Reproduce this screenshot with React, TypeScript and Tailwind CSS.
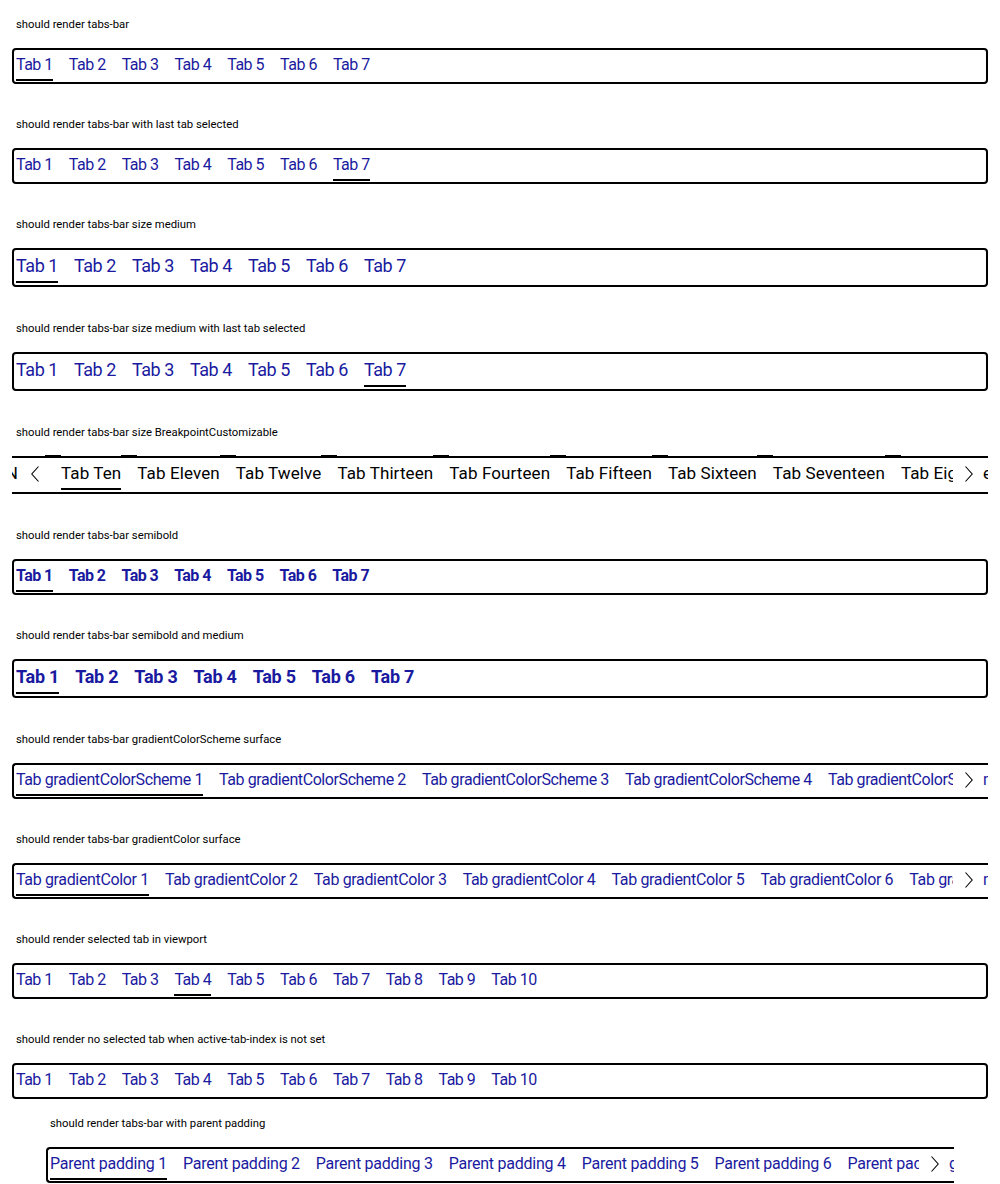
import clsx from "clsx";

type Size = "small" | "medium";

function Chevron({ dir }: { dir: "left" | "right" }) {
  return (
    <svg width="8" height="16" viewBox="0 0 8 16" fill="none" className="shrink-0">
      <polyline
        points={dir === "left" ? "7.5,0.5 0.8,8 7.5,15.5" : "0.5,0.5 7.2,8 0.5,15.5"}
        stroke="#000"
        strokeWidth="1.1"
      />
    </svg>
  );
}

function Tab({
  label,
  active,
  size,
  bold,
  tracking,
}: {
  label: string;
  active: boolean;
  size: Size;
  bold?: boolean;
  tracking: string;
}) {
  return (
    <div
      className={clsx(
        "shrink-0 whitespace-nowrap border-b-2",
        active ? "border-black" : "border-transparent",
        size === "small" ? "text-[16px] leading-[28px]" : "text-[18px] leading-[31px]",
        bold && "font-bold",
        tracking,
      )}
    >
      {label}
    </div>
  );
}

function TabsBar({
  tabs,
  active,
  size = "small",
  bold,
  trailing,
  tracking = "tracking-[-0.5px]",
}: {
  tabs: string[];
  active?: number;
  size?: Size;
  bold?: boolean;
  trailing?: string;
  tracking?: string;
}) {
  return (
    <div
      className={clsx(
        "flex border-black pl-[2px] text-[#1a1aa0]",
        trailing ? "rounded-l-[4px] border-y-2 border-l-2" : "rounded-[4px] border-2",
        size === "small" ? "pb-px pt-px" : "pb-[2px]",
      )}
    >
      <div className="flex min-w-0 flex-1 gap-4 overflow-hidden">
        {tabs.map((t, i) => (
          <Tab key={t} label={t} active={i === active} size={size} bold={bold} tracking={tracking} />
        ))}
      </div>
      {trailing && (
        <div className="flex h-[28px] w-[35px] shrink-0 items-center overflow-hidden whitespace-nowrap text-[16px]">
          <span className="ml-[12px]">
            <Chevron dir="right" />
          </span>
          <span className="ml-[10px]">{trailing}</span>
        </div>
      )}
    </div>
  );
}

function BreakpointBar() {
  const tabs = [
    "Tab Ten",
    "Tab Eleven",
    "Tab Twelve",
    "Tab Thirteen",
    "Tab Fourteen",
    "Tab Fifteen",
    "Tab Sixteen",
    "Tab Seventeen",
  ];
  return (
    <div className="flex overflow-hidden border-b-2 border-black text-[17px] tracking-[0.1px] text-black">
      <div className="mt-px flex w-[6px] shrink-0 justify-end overflow-hidden border-t-2 border-black leading-[30px]">
        <span>N</span>
      </div>
      <div className="mt-px flex h-[33px] w-[27px] shrink-0 items-center border-t-2 border-black pl-[13px]">
        <Chevron dir="left" />
      </div>
      {tabs.map((t, i) => (
        <div key={t} className="flex shrink-0">
          <div className="w-4 border-t-[3px] border-black" />
          <div className="mt-px border-t-2 border-black pb-[2px]">
            <div
              className={clsx(
                "whitespace-nowrap border-b-2 leading-[30px]",
                i === 0 ? "border-black" : "border-transparent",
              )}
            >
              {t}
            </div>
          </div>
        </div>
      ))}
      <div className="w-4 shrink-0 border-t-[3px] border-black" />
      <div className="mt-px min-w-0 flex-1 overflow-hidden whitespace-nowrap border-t-2 border-black leading-[30px]">
        Tab Eighteen
      </div>
      <div className="mt-px flex h-[33px] w-[35px] shrink-0 items-center overflow-hidden whitespace-nowrap border-t-2 border-black">
        <span className="ml-[12px]">
          <Chevron dir="right" />
        </span>
        <span className="ml-[10px]">eighteen</span>
      </div>
    </div>
  );
}

function Section({
  title,
  children,
  className,
  gap = "mt-4",
}: {
  title: string;
  children: React.ReactNode;
  className?: string;
  gap?: string;
}) {
  return (
    <div className={clsx(className ?? "px-3 pb-4 pt-4")}>
      <p className="pl-1 pt-[2px] text-[11.3px] leading-[14px] text-black">{title}</p>
      <div className={clsx(gap, "overflow-hidden")}>{children}</div>
    </div>
  );
}

const seven = ["Tab 1", "Tab 2", "Tab 3", "Tab 4", "Tab 5", "Tab 6", "Tab 7"];
const ten = [...seven, "Tab 8", "Tab 9", "Tab 10"];
const scheme = [1, 2, 3, 4, 5].map((n) => `Tab gradientColorScheme ${n}`);
const gradient = [1, 2, 3, 4, 5, 6, 7].map((n) => `Tab gradientColor ${n}`);
const parent = [1, 2, 3, 4, 5, 6, 7].map((n) => `Parent padding ${n}`);

export default function App() {
  return (
    <div className="min-h-[1184px] bg-white [font-family:Roboto,sans-serif]">
      <Section title="should render tabs-bar">
        <TabsBar tabs={seven} active={0} />
      </Section>
      <Section title="should render tabs-bar with last tab selected">
        <TabsBar tabs={seven} active={6} />
      </Section>
      <Section title="should render tabs-bar size medium" className="px-3 pb-[17px] pt-4">
        <TabsBar tabs={seven} active={0} size="medium" tracking="tracking-[-0.45px]" />
      </Section>
      <Section title="should render tabs-bar size medium with last tab selected" className="px-3 pb-[17px] pt-4">
        <TabsBar tabs={seven} active={6} size="medium" tracking="tracking-[-0.45px]" />
      </Section>
      <Section
        title="should render tabs-bar size BreakpointCustomizable"
        className="px-3 pb-[17px] pt-4"
        gap="mt-[15px]"
      >
        <BreakpointBar />
      </Section>
      <Section title="should render tabs-bar semibold">
        <TabsBar tabs={seven} active={0} bold tracking="tracking-[-0.55px]" />
      </Section>
      <Section title="should render tabs-bar semibold and medium" className="px-3 pb-[17px] pt-4">
        <TabsBar tabs={seven} active={0} size="medium" bold tracking="tracking-[-0.25px]" />
      </Section>
      <Section title="should render tabs-bar gradientColorScheme surface">
        <TabsBar tabs={scheme} active={0} trailing="n" tracking="tracking-[-0.41px]" />
      </Section>
      <Section title="should render tabs-bar gradientColor surface">
        <TabsBar tabs={gradient} active={0} trailing="n" tracking="tracking-[-0.35px]" />
      </Section>
      <Section title="should render selected tab in viewport">
        <TabsBar tabs={ten} active={3} />
      </Section>
      <Section title="should render no selected tab when active-tab-index is not set">
        <TabsBar tabs={ten} />
      </Section>
      <Section title="should render tabs-bar with parent padding" className="px-[46px]">
        <TabsBar tabs={parent} active={0} trailing="g" tracking="tracking-[-0.25px]" />
      </Section>
    </div>
  );
}
